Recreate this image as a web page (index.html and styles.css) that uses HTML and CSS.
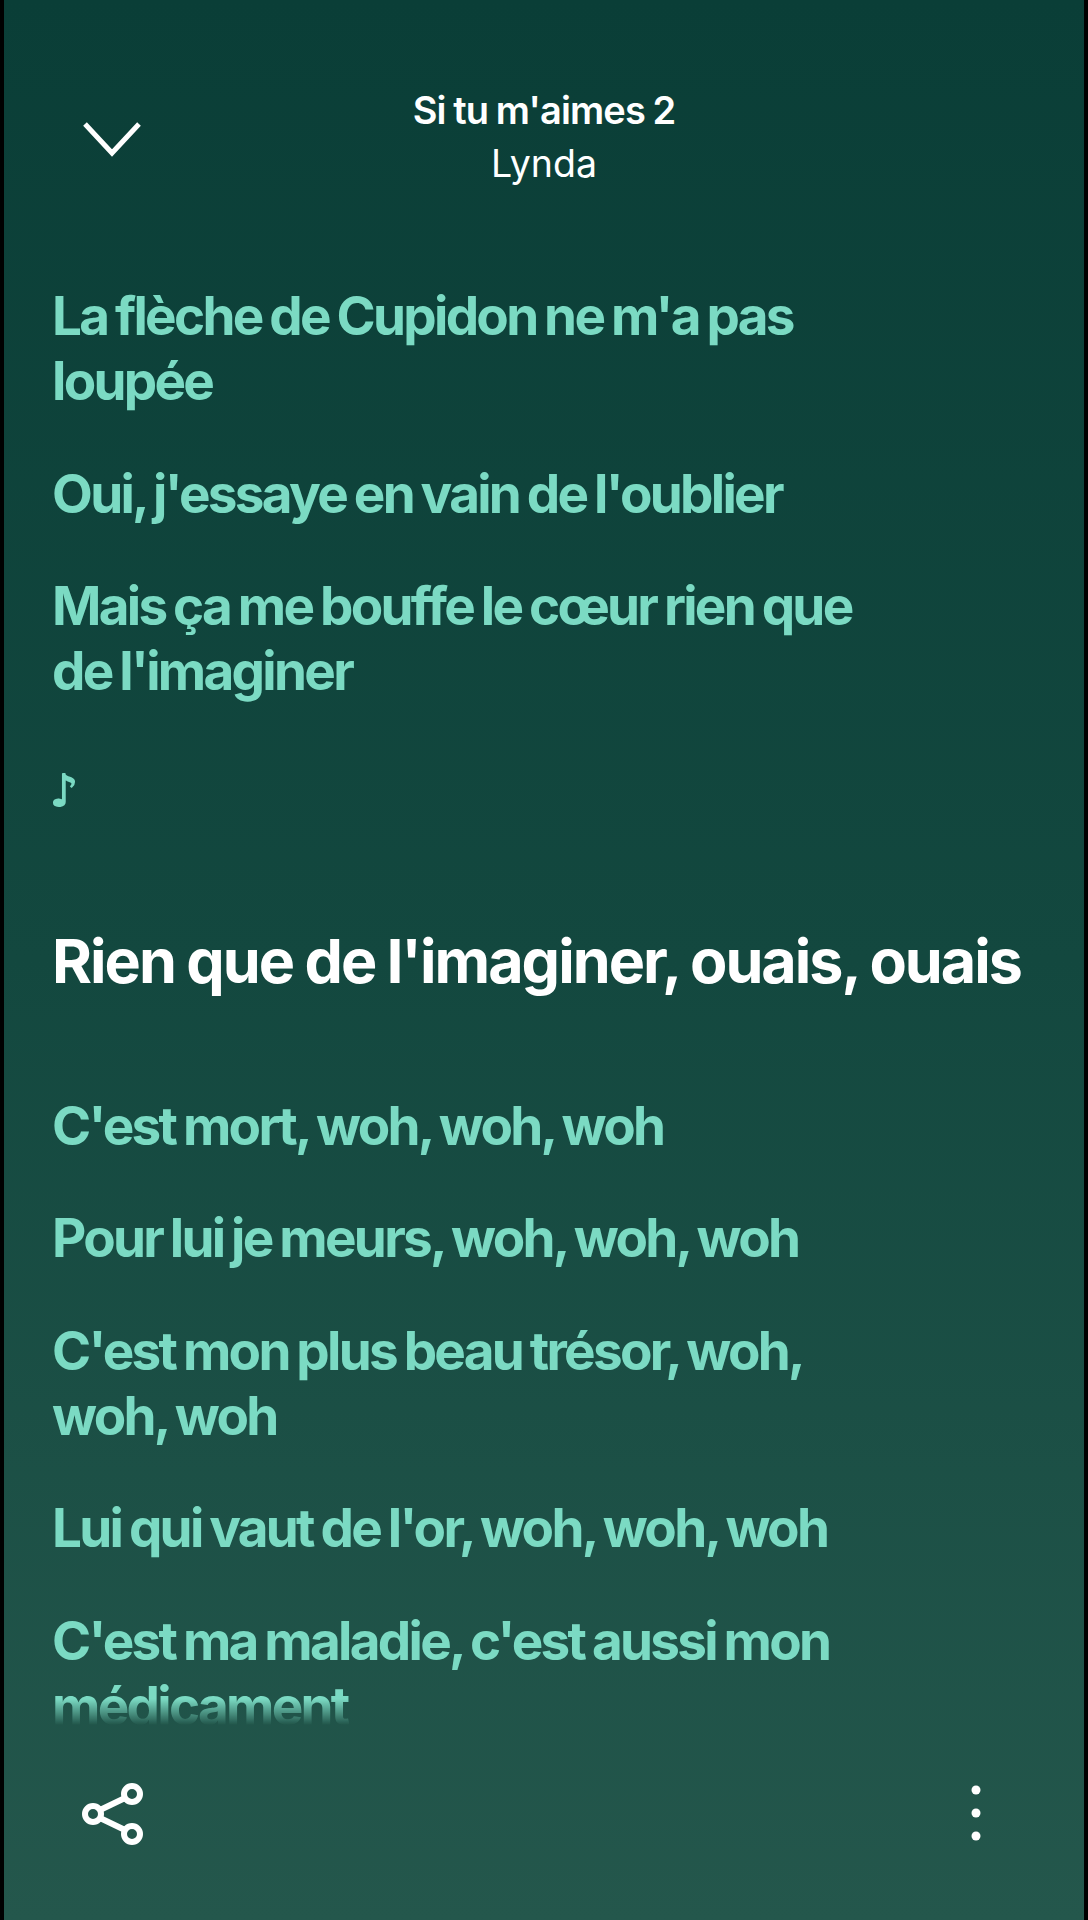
FILE: index.html
```html
<!DOCTYPE html>
<html lang="fr">
<head>
    <meta charset="UTF-8">
    <meta name="viewport" content="width=device-width, initial-scale=1.0">
    <title>Si tu m'aimes 2</title>
    <link rel="stylesheet" href="styles.css">
</head>
<body>
    <div class="screen">
        <header class="top">
            <button class="icon-btn close-btn" aria-label="Fermer">
                <svg width="60" height="40" viewBox="0 0 60 40"><path d="M3 5 L30 34 L57 5" fill="none" stroke="#fff" stroke-width="5"/></svg>
            </button>
            <div class="track">
                <div class="track-title">Si tu m'aimes 2</div>
                <div class="track-artist">Lynda</div>
            </div>
        </header>

        <main class="lyrics">
            <p class="line">La flèche de Cupidon ne m'a pas<br>loupée</p>
            <p class="line">Oui, j'essaye en vain de l'oublier</p>
            <p class="line">Mais ça me bouffe le cœur rien que<br>de l'imaginer</p>
            <p class="line note">♪</p>
            <p class="line current">Rien que de l'imaginer, ouais, ouais</p>
            <p class="line">C'est mort, woh, woh, woh</p>
            <p class="line">Pour lui je meurs, woh, woh, woh</p>
            <p class="line">C'est mon plus beau trésor, woh,<br>woh, woh</p>
            <p class="line">Lui qui vaut de l'or, woh, woh, woh</p>
            <p class="line">C'est ma maladie, c'est aussi mon<br>médicament</p>
        </main>

        <footer class="bottom">
            <button class="icon-btn" aria-label="Partager">
                <svg width="62" height="62" viewBox="0 0 62 62" fill="none" stroke="#fff" stroke-width="6"><circle cx="50" cy="11" r="8"/><circle cx="11" cy="31" r="8"/><circle cx="50" cy="51" r="8"/><path d="M18 27 L43 15 M18 35 L43 47"/></svg>
            </button>
            <button class="icon-btn dots-btn" aria-label="Plus">
                <svg width="12" height="58" viewBox="0 0 12 58" fill="#fff"><circle cx="6" cy="6" r="4.5"/><circle cx="6" cy="29" r="4.5"/><circle cx="6" cy="52" r="4.5"/></svg>
            </button>
        </footer>
    </div>
</body>
</html>
```

FILE: styles.css
```css
html, body {
    margin: 0;
    padding: 0;
    background: #000;
}
.screen {
    height: 1920px;
    margin: 0 4px;
    display: flex;
    flex-direction: column;
    overflow: hidden;
    background: linear-gradient(180deg, #0a3e37 0%, #13483f 50%, #24574c 100%);
    font-family: Inter, "Noto Sans", sans-serif;
    color: #fff;
}
.top {
    height: 210px;
    flex: none;
    position: relative;
    box-sizing: border-box;
    padding-top: 85px;
    text-align: center;
}
.close-btn {
    position: absolute;
    left: 78px;
    top: 119px;
}
.icon-btn {
    padding: 0;
    border: none;
    background: none;
    line-height: 0;
}
.track-title {
    font-size: 38px;
    font-weight: 600;
    line-height: 50px;
    letter-spacing: -0.9px;
    word-spacing: -1px;
}
.track-artist {
    font-size: 37.5px;
    font-weight: 400;
    line-height: 58px;
}
.lyrics {
    flex: 1;
    min-height: 0;
    overflow: hidden;
    padding: 74px 0 0 48px;
    -webkit-mask-image: linear-gradient(180deg, #000 0, #000 calc(100% - 26px), transparent 100%);
    mask-image: linear-gradient(180deg, #000 0, #000 calc(100% - 26px), transparent 100%);
}
.line {
    margin: 0 0 47.5px;
    font-size: 53px;
    font-weight: 700;
    line-height: 65px;
    letter-spacing: -2.7px;
    word-spacing: -2.2px;
    color: #7bdac3;
}
.note {
    margin: 53.5px 0 106px;
    font-family: "DejaVu Sans", sans-serif;
    font-size: 44px;
    text-indent: -2px;
    -webkit-text-stroke: 1.5px #7bdac3;
}
.current {
    margin-bottom: 100px;
    font-size: 61px;
    letter-spacing: -2px;
    word-spacing: -1px;
    color: #fff;
}
.bottom {
    height: 195px;
    flex: none;
    box-sizing: border-box;
    display: flex;
    justify-content: space-between;
    align-items: flex-start;
    padding: 58px 102px 0 78px;
}
.dots-btn {
    margin-top: 1px;
}
```
